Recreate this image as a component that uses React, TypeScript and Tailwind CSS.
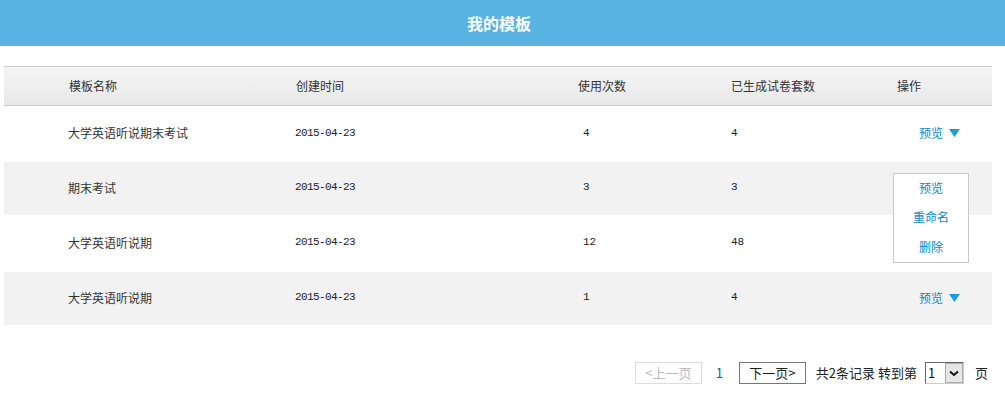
import React from "react"

type Row = { name: string; date: string; used: string; made: string; h: string; op: boolean }

const rows: Row[] = [
  { name: "大学英语听说期末考试", date: "2015-04-23", used: "4", made: "4", h: "h-[56px] bg-white", op: true },
  { name: "期末考试", date: "2015-04-23", used: "3", made: "3", h: "h-[53px] bg-[#f2f2f2]", op: false },
  { name: "大学英语听说期", date: "2015-04-23", used: "12", made: "48", h: "h-[57px] bg-white", op: false },
  { name: "大学英语听说期", date: "2015-04-23", used: "1", made: "4", h: "h-[53px] bg-[#f2f2f2]", op: true },
]

const cjk = { fontFamily: '"Noto Sans CJK SC", "Noto Sans", sans-serif' }
const mono = { fontFamily: '"Liberation Mono", "Noto Sans CJK SC", monospace' }

function Caret() {
  return (
    <svg width="11" height="8" viewBox="0 0 11 8" className="ml-[6px]">
      <path d="M0 0 H11 L5.5 8 Z" fill="#1a9de0" />
    </svg>
  )
}

export default function App() {
  return (
    <div className="w-[1005px] h-[395px] bg-white text-[12px] text-[#333]" style={cjk}>
      <div className="h-[46px] bg-[#58b3e2] flex items-center justify-center pr-[7px]">
        <span className="text-white text-[16px] font-bold">我的模板</span>
      </div>

      <div className="relative mt-[20px] ml-[4px] w-[988px]">
        <div className="h-[40px] flex items-center pl-[65px] border-y border-[#cccccc] bg-gradient-to-b from-[#f5f5f5] to-[#e8e8e8]">
          <div className="w-[227px]">模板名称</div>
          <div className="w-[282px]">创建时间</div>
          <div className="w-[153px]">使用次数</div>
          <div className="w-[166px]">已生成试卷套数</div>
          <div>操作</div>
        </div>

        {rows.map((r, i) => (
          <div key={i} className={`flex items-center pl-[64px] pb-[2px] ${r.h}`}>
            <div className="w-[227px]">{r.name}</div>
            <div className="w-[288px] text-[11px] tracking-[-0.6px] text-[#222]" style={mono}>{r.date}</div>
            <div className="w-[148px] text-[11px] text-[#222]" style={mono}>{r.used}</div>
            <div className="w-[188px] text-[11px] text-[#222]" style={mono}>{r.made}</div>
            {r.op && (
              <div className="flex items-center text-[#0a86c8]">
                预览
                <Caret />
              </div>
            )}
          </div>
        ))}

        <div className="absolute left-[889px] top-[107px] w-[76px] h-[90px] bg-white border border-[#c8c8c8] flex flex-col items-center text-[#0a86c8]">
          <div className="h-[30px] leading-[28px]">预览</div>
          <div className="h-[30px] leading-[28px]">重命名</div>
          <div className="h-[30px] leading-[28px]">删除</div>
        </div>
      </div>

      <div className="mt-[37px] flex items-center justify-end pr-[17px] h-[22px] text-[13px]">
        <div className="w-[67px] h-[22px] border border-[#dddddd] text-[#bbbbbb] flex items-center justify-center">&lt;上一页</div>
        <div className="ml-[14px] text-[#1a5a9a] w-[8px]">1</div>
        <div className="ml-[15px] w-[67px] h-[22px] border border-[#777] text-[#222] flex items-center justify-center">下一页&gt;</div>
        <div className="ml-[10px] text-[#222]">共2条记录 转到第</div>
        <div className="ml-[8px] w-[39px] h-[22px] flex border border-t-[#666] border-l-[#666] border-r-[#ccc] border-b-[#ccc] bg-white">
          <div className="w-[19px] pl-[2px] text-[#111] leading-[20px]">1</div>
          <div className="flex-1 bg-[#e6e6e6] border border-[#aaa] flex items-center justify-center">
            <svg width="10" height="7" viewBox="0 0 10 7">
              <path d="M1 1.5 L5 5 L9 1.5" stroke="#111" strokeWidth="2" fill="none" />
            </svg>
          </div>
        </div>
        <div className="ml-[11px] text-[#222]">页</div>
      </div>
    </div>
  )
}
